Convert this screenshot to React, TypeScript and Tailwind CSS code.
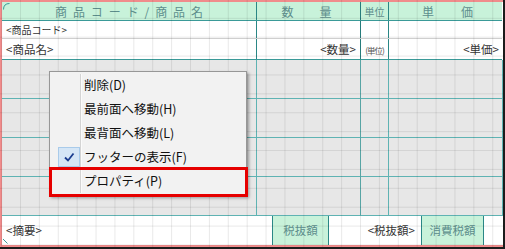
import React from "react";

const Spread = ({ chars, w, cls }: { chars: string[]; w: string; cls: string }) => (
  <div className={`flex justify-between ${w} ${cls}`}>
    {chars.map((c, i) => (
      <span key={i}>{c}</span>
    ))}
  </div>
);

const DetailRow = () => (
  <div className="flex h-[39px] border-b border-[#5fb3b3]">
    <div className="w-[255px] border-r border-[#5fb3b3]" />
    <div className="w-[104px] border-r border-[#5fb3b3]" />
    <div className="w-[28px] border-r border-[#5fb3b3]" />
    <div className="flex-1 border-r border-[#5fb3b3]" />
  </div>
);

export default function App() {
  return (
    <div className="relative w-[505px] h-[249px] bg-white overflow-hidden font-['Noto_Sans_CJK_JP',sans-serif] border-r-2 border-b-2 border-[#1c1c1c]">
      <div className="flex flex-col h-full border-t-2 border-l-2 border-b-2 border-[#f08c8c]">
        {/* header */}
        <div className="flex h-[19px] w-[500px] bg-[#c8f2da] border-b border-[#3a9a98] text-[#5d8e8c] text-[12px] leading-none">
          <div className="w-[255px] border-r border-[#2a8786] flex items-center justify-center pt-[2px]">
            <Spread chars={["商", "品", "コ", "ー", "ド", "/", "商", "品", "名"]} w="w-[148px]" cls="" />
          </div>
          <div className="w-[104px] border-r border-[#2a8786] flex items-center justify-center pt-[2px]">
            <Spread chars={["数", "量"]} w="w-[50px]" cls="ml-[-4px]" />
          </div>
          <div className="w-[28px] border-r border-[#2a8786] flex items-center justify-center text-[10px] pt-[2px]">
            単位
          </div>
          <div className="flex-1 flex items-center justify-center pt-[2px]">
            <Spread chars={["単", "価"]} w="w-[51px]" cls="ml-[4px]" />
          </div>
        </div>
        {/* row 1 */}
        <div className="flex h-[18px] w-[500px] border-b border-[#cfcfcf] text-[10px] leading-none text-[#333]">
          <div className="w-[255px] border-r border-[#2a8786] flex items-center pl-[4px] pt-[1px]">&lt;商品コード&gt;</div>
          <div className="w-[104px] border-r border-[#2a8786]" />
          <div className="w-[28px] border-r border-[#2a8786]" />
          <div className="flex-1" />
        </div>
        {/* row 2 */}
        <div className="flex h-[21px] w-[500px] border-b border-[#3a9a98] text-[11.5px] leading-none text-[#333]">
          <div className="w-[255px] border-r border-[#2a8786] flex items-center pl-[4px] pt-[2px]">&lt;商品名&gt;</div>
          <div className="w-[104px] border-r border-[#2a8786] flex items-center justify-end pr-[4px] pt-[2px]">&lt;数量&gt;</div>
          <div className="w-[28px] border-r border-[#2a8786] flex items-center justify-center pt-[2px] text-[8.5px] tracking-[-1px] text-[#555]">(単位)</div>
          <div className="flex-1 flex items-center justify-end pr-[3px] pt-[2px]">&lt;単価&gt;</div>
        </div>
        {/* detail */}
        <div className="flex flex-col bg-[#e7e7e7] w-[501px]">
          <DetailRow />
          <DetailRow />
          <DetailRow />
          <DetailRow />
        </div>
        {/* footer */}
        <div className="flex flex-1 items-stretch text-[11.5px] leading-none">
          <div className="w-[270px] flex items-center pl-[4px] pt-[1px] text-[#333]">&lt;摘要&gt;</div>
          <div className="w-[57px] bg-[#c8f2da] border-x border-[#2a8786] flex items-center justify-center text-[#5d8e8c] pt-[1px]">税抜額</div>
          <div className="w-[92px] flex items-center justify-end pr-[6px] pt-[1px] text-[#333]">&lt;税抜額&gt;</div>
          <div className="w-[63px] bg-[#c8f2da] border-x border-[#2a8786] flex items-center justify-center text-[#5d8e8c] pt-[1px]">消費税額</div>
          <div className="flex-1" />
        </div>
      </div>

      {/* grid overlay */}
      <div className="pointer-events-none absolute inset-0 bg-[linear-gradient(to_right,rgba(0,0,0,0.085)_1px,transparent_1px),linear-gradient(to_bottom,rgba(0,0,0,0.085)_1px,transparent_1px)] bg-[size:18.9px_18.9px] bg-[position:1.1px_-1.1px]" />

      {/* corner marks */}
      <svg className="absolute left-[2px] top-[2px]" width="8" height="8" viewBox="0 0 8 8">
        <path d="M1.5 7.5 Q1.5 1.5 7.5 1.5" fill="none" stroke="#3a9a98" strokeWidth="1" />
      </svg>
      <svg className="absolute left-[2px] top-[238px]" width="7" height="7" viewBox="0 0 7 7">
        <path d="M1 1 L5.5 5.5" fill="none" stroke="#3a9a98" strokeWidth="1" />
      </svg>

      {/* context menu */}
      <div className="absolute left-[49px] top-[71px] w-[198px] bg-[#f2f2f2] border border-[#979797] shadow-[2px_2px_3px_rgba(0,0,0,0.35)] pt-[1px] pb-[2px] text-[12.5px] leading-none text-[#111]">
        <div className="absolute left-[30px] top-[2px] bottom-[2px] w-[2px] border-l border-[#d4d4d4] bg-white/70" />
        {["削除(D)", "最前面へ移動(H)", "最背面へ移動(L)", "フッターの表示(F)", "プロパティ(P)"].map((t, i) => (
          <div key={i} className="relative flex items-center h-[24px]">
            <div className="w-[33px] flex items-center justify-center">
              {i === 3 && (
                <div className="ml-[4px] w-[22px] h-[20px] bg-[#d5e6f6] border border-[#a9cbea] flex items-center justify-center">
                  <svg width="14" height="14" viewBox="0 0 14 14">
                    <path d="M3 7.5 L6 10.5 L11.5 3.5" fill="none" stroke="#1b3d8f" strokeWidth="1.8" />
                  </svg>
                </div>
              )}
            </div>
            <span className="pl-[1px]">{t}</span>
          </div>
        ))}
      </div>

      {/* red highlight */}
      <div className="absolute left-[49px] top-[167px] w-[199px] h-[30px] border-[3px] border-[#e60000]" />
    </div>
  );
}
